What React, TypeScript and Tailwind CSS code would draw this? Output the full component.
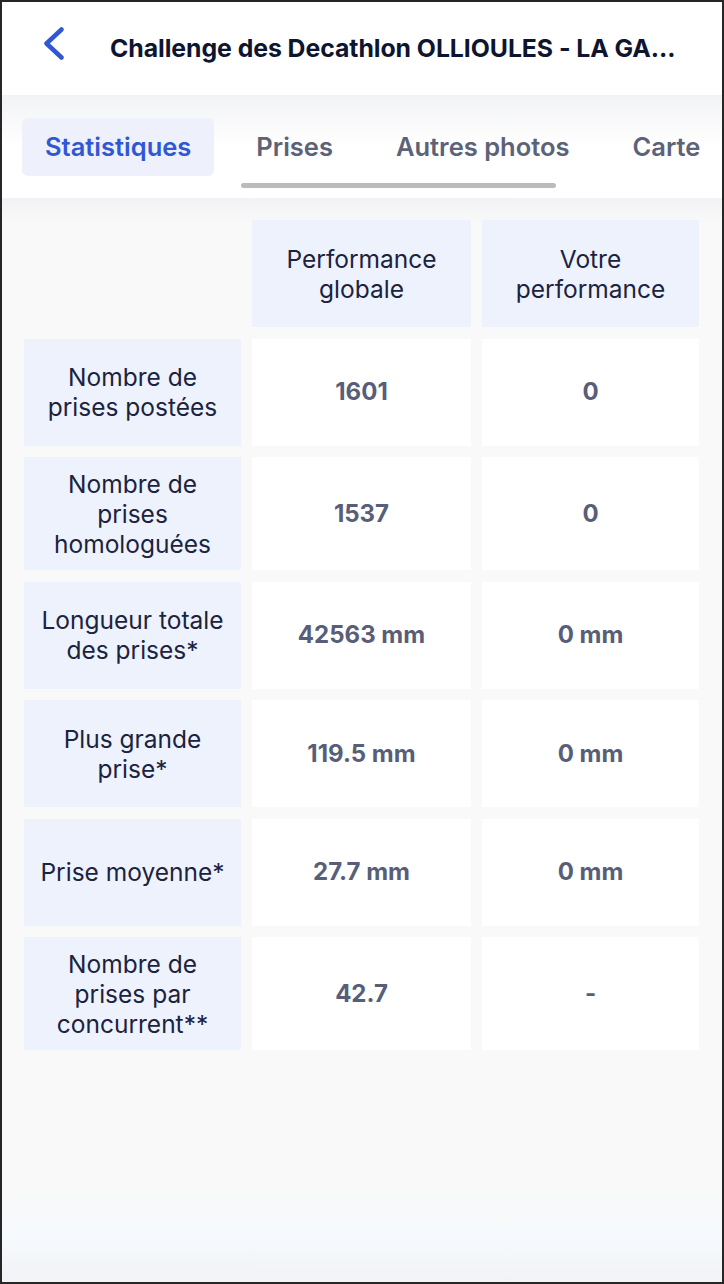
import React from "react";

/* ---------------------------------- data ---------------------------------- */

const tabs = ["Statistiques", "Prises", "Autres photos", "Carte"] as const;

const rows = [
  { label: ["Nombre de", "prises postées"], global: "1601", mine: "0" },
  { label: ["Nombre de", "prises", "homologuées"], global: "1537", mine: "0", tall: true },
  { label: ["Longueur totale", "des prises*"], global: "42563 mm", mine: "0 mm" },
  { label: ["Plus grande", "prise*"], global: "119.5 mm", mine: "0 mm" },
  { label: ["Prise moyenne*"], global: "27.7 mm", mine: "0 mm" },
  { label: ["Nombre de", "prises par", "concurrent**"], global: "42.7", mine: "-", tall: true },
];

/* -------------------------------- component ------------------------------- */

function Lines({ lines }: { lines: string[] }) {
  return (
    <span>
      {lines.map((l, i) => (
        <React.Fragment key={i}>
          {i > 0 && <br />}
          {l}
        </React.Fragment>
      ))}
    </span>
  );
}

export default function App() {
  return (
    <div
      className="flex h-[1284px] w-[724px] flex-col overflow-hidden border-2 border-[#262626] bg-[#f9f9f9]"
      style={{ fontFamily: "Inter, 'Noto Sans', sans-serif" }}
    >
      {/* header */}
      <header className="flex h-[93px] shrink-0 items-center bg-white">
        <svg width="24" height="40" viewBox="0 0 24 40" className="ml-[38px] mt-[-3px] shrink-0">
          <path d="M21.5 2.5 L6.5 16.5 L21.5 30.5" fill="none" stroke="#3157d5" strokeWidth="4.5" strokeLinecap="round" strokeLinejoin="round" />
        </svg>
        <h1 className="ml-[46px] truncate text-[24.8px] font-bold tracking-[-0.05px] text-[#0d1530]">
          Challenge des Decathlon OLLIOULES - LA GA...
        </h1>
      </header>

      {/* tabs */}
      <nav className="relative h-[103px] shrink-0 bg-gradient-to-b from-[#f2f3f6] via-white to-white">
        <div className="flex items-center gap-[21px] whitespace-nowrap pl-[20px] pt-[23px]">
          {tabs.map((t, i) => (
            <div
              key={t}
              className={`flex h-[58px] items-center rounded-[6px] text-[25.5px] font-semibold ${
                i === 0 ? "bg-[#eef1fb] px-[23px] text-[#3157d5]" : "px-[21px] text-[#5c6278]"
              }`}
            >
              {t}
            </div>
          ))}
        </div>
        <div className="absolute left-[239px] top-[88px] h-[5px] w-[315px] rounded-full bg-[#bbbbbb]" />
      </nav>

      {/* table */}
      <main className="flex-1 bg-[linear-gradient(to_bottom,#f1f2f5,#f9f9f9_26px)] px-[22px] pt-[22px]">
        <div className="grid grid-cols-[217px_219px_217px] gap-x-[11px] gap-y-[11.5px] text-[24.5px] leading-[30px]">
          <div />
          <div className="flex min-h-[107px] items-center justify-center bg-[#eef2fc] text-center text-[#1b2340]">
            <Lines lines={["Performance", "globale"]} />
          </div>
          <div className="flex min-h-[107px] items-center justify-center bg-[#eef2fc] text-center text-[#1b2340]">
            <Lines lines={["Votre", "performance"]} />
          </div>

          {rows.map((r) => (
            <React.Fragment key={r.label.join(" ")}>
              <div
                className={`flex items-center justify-center bg-[#eef2fc] text-center text-[#1b2340] ${
                  r.tall ? "min-h-[113px]" : "min-h-[107px]"
                }`}
              >
                <Lines lines={r.label} />
              </div>
              <div className="flex items-center justify-center bg-white text-[24px] font-bold text-[#585e78]">{r.global}</div>
              <div className="flex items-center justify-center bg-white text-[24px] font-bold text-[#585e78]">{r.mine}</div>
            </React.Fragment>
          ))}
        </div>
      </main>
      <div className="h-[90px] shrink-0 bg-gradient-to-b from-[#f9f9f9] via-[#f6f9fd] to-[#f1f3f6]" />
    </div>
  );
}
